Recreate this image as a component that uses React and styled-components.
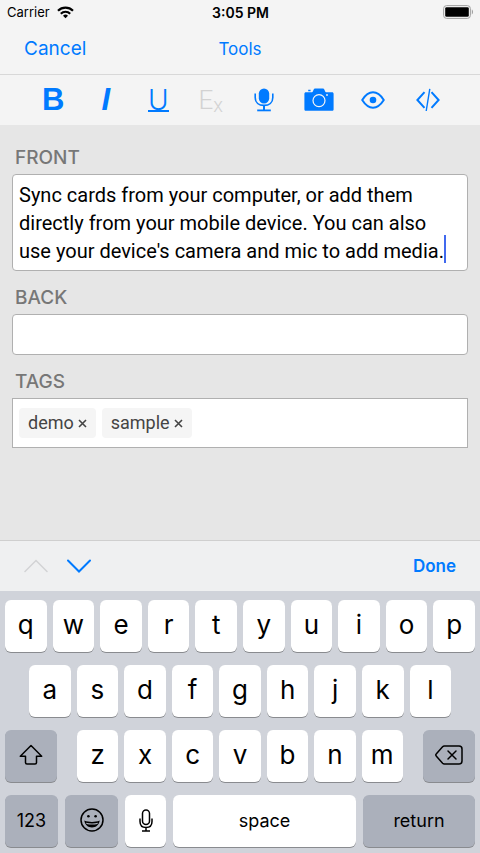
import { useState } from "react";
import styled, { createGlobalStyle } from "styled-components";

const GlobalStyle = createGlobalStyle`
  *, *::before, *::after {
    box-sizing: border-box;
  }

  body {
    margin: 0;
    background-color: #e6e6e6;
    font-family: Inter, "Liberation Sans", sans-serif;
    color: #000;
  }

  button, input, textarea {
    font-family: inherit;
    color: inherit;
    margin: 0;
    padding: 0;
    border: none;
    background: none;
    outline: none;
  }

  button {
    cursor: pointer;
  }
`;

const Screen = styled.div`
  display: flex;
  flex-direction: column;
  min-height: 100vh;
`;

const StatusBar = styled.div`
  display: grid;
  grid-template-columns: 1fr auto 1fr;
  align-items: center;
  height: 24px;
  padding: 0 6px 0 7px;
  background-color: #f4f4f4;
  font-size: 13px;
`;

const Carrier = styled.div`
  display: flex;
  align-items: center;
  gap: 7px;
`;

const Time = styled.time`
  font-size: 14px;
  font-weight: 600;
`;

const Battery = styled.div`
  display: flex;
  justify-content: flex-end;
`;

const NavBar = styled.header`
  display: grid;
  grid-template-columns: 1fr auto 1fr;
  align-items: center;
  height: 51px;
  padding: 0 24px;
  background-color: #f4f4f4;
  border-bottom: 1px solid #d8d8d8;
`;

const NavButton = styled.button`
  justify-self: start;
  font-size: ${(props) => (props.$large ? "19px" : "17px")};
  line-height: 24px;
  color: #007aff;
`;

const Toolbar = styled.div`
  display: grid;
  grid-template-columns: repeat(4, 52fr) repeat(4, 54fr);
  height: 50px;
  padding: 0 25px 0 27px;
  background-color: #f4f4f4;
`;

const ToolButton = styled.button`
  display: flex;
  align-items: center;
  justify-content: center;
  color: #007aff;

  &:disabled {
    color: #d2d2d2;
  }
`;

const Letter = styled.span`
  font-family: "Liberation Sans", sans-serif;
  font-size: 31px;
  font-weight: 700;
  font-style: ${(props) => (props.$italic ? "italic" : "normal")};
  line-height: 32px;
`;

const Underlined = styled.span`
  height: 23px;
  border-bottom: 2px solid currentColor;
  font-size: 28px;
  font-weight: 300;
  line-height: 22px;
`;

const ClearFormat = styled.span`
  display: flex;
  align-items: flex-end;
  font-family: Roboto, "Liberation Sans", sans-serif;
  font-size: 26px;
  font-weight: 300;
  line-height: 26px;

  & small {
    font-size: 20px;
    line-height: 16px;
  }
`;

const Editor = styled.main`
  flex: 1;
  padding: 6px 12px 24px;
  background-color: #e6e6e6;
`;

const Label = styled.label`
  display: block;
  padding: 15px 3px 4px;
  font-size: 19px;
  font-weight: 500;
  line-height: 24px;
  color: #777;
`;

const Field = styled.div`
  position: relative;
  display: flex;
  flex-wrap: wrap;
  gap: 6px;
  background-color: #fff;
  border: 1px solid #b0b0b0;
  border-radius: ${(props) => (props.$square ? "0" : "4px")};
  padding: ${(props) => (props.$square ? "9px 6px" : "0")};
`;

const TextArea = styled.textarea`
  display: block;
  flex: 1;
  padding: 6px 6px 5px;
  font-family: Roboto, "Liberation Sans", sans-serif;
  font-size: 20px;
  line-height: 28px;
  resize: none;
  overflow: hidden;
`;

const Caret = styled.span`
  position: absolute;
  right: 21px;
  bottom: 7px;
  width: 2px;
  height: 28px;
  background-color: #4169ee;
`;

const Tag = styled.span`
  display: flex;
  align-items: center;
  gap: 4px;
  height: 30px;
  padding: 0 9px 2px;
  background-color: #f5f5f5;
  border-radius: 4px;
  font-family: Roboto, "Liberation Sans", sans-serif;
  font-size: 18px;
  color: #444;
`;

const RemoveTag = styled.button`
  display: flex;
  padding-top: 2px;
`;

const TagInput = styled.input`
  flex: 1;
  min-width: 40px;
  height: 30px;
  font-size: 18px;
`;

const AccessoryBar = styled.div`
  display: flex;
  align-items: center;
  justify-content: space-between;
  height: 51px;
  padding: 0 24px;
  background-color: #eff0f1;
  border-top: 1px solid #cfcfcf;
`;

const Arrows = styled.div`
  display: flex;
  gap: 19px;
`;

const ArrowButton = styled.button`
  display: flex;
  color: #007aff;

  &:disabled {
    color: #d2d3d5;
  }
`;

const DoneButton = styled.button`
  font-size: 17px;
  font-weight: 600;
  line-height: 24px;
  color: #007aff;
`;

const Keyboard = styled.div`
  display: flex;
  flex-direction: column;
  gap: 13px;
  padding: 9px 5px 6px;
  background-color: #d0d3da;
`;

const KeyRow = styled.div`
  display: flex;
  gap: ${(props) => props.$gap || "6px"};
  padding: 0 ${(props) => props.$inset || "0"};
`;

const KeyGroup = styled.div`
  flex: 1;
  display: flex;
  gap: 6px;
`;

const Key = styled.button`
  display: flex;
  align-items: center;
  justify-content: center;
  flex: ${(props) => (props.$width ? `0 0 ${props.$width}` : "1")};
  min-width: 0;
  height: 52px;
  padding-bottom: ${(props) => (props.$letter ? "4px" : "2px")};
  background-color: ${(props) => (props.$dark ? "#abb0bb" : "#fff")};
  border-radius: 6px;
  box-shadow: 0 1px 0 #898b8f;
  font-size: ${(props) => (props.$letter ? "26px" : "18px")};
`;

const topRow = "qwertyuiop".split("");
const middleRow = "asdfghjkl".split("");
const bottomRow = "zxcvbnm".split("");

function WifiIcon() {
  return (
    <svg width="17" height="13" viewBox="0 0 17 13" fill="none" stroke="#000">
      <path d="M1 4.8a10.6 10.6 0 0 1 15 0" strokeWidth="2.2" />
      <path d="M3.8 7.7a6.6 6.6 0 0 1 9.4 0" strokeWidth="2.1" />
      <path d="M8.5 12.2 6 9.8a3.6 3.6 0 0 1 5 0z" fill="#000" stroke="none" />
    </svg>
  );
}

function BatteryIcon() {
  return (
    <svg width="31" height="14" viewBox="0 0 31 14">
      <rect x="0.6" y="0.6" width="26.8" height="12.8" rx="3" fill="none" stroke="#a0a0a0" />
      <rect x="2.2" y="2.2" width="23.6" height="9.6" rx="1.4" />
      <path d="M28.8 4.6c1.6.6 1.6 4.2 0 4.8z" fill="#a0a0a0" />
    </svg>
  );
}

function MicIcon() {
  return (
    <svg width="20" height="24" viewBox="0 0 20 24" fill="none" stroke="currentColor">
      <rect x="4.8" y="0.4" width="10.4" height="15" rx="5.2" fill="currentColor" stroke="none" />
      <path d="M1.2 5.6v3.8c0 5.2 3.6 8 8.8 8s8.8-2.8 8.8-8V5.6" strokeWidth="1.6" />
      <path d="M10 17v5" strokeWidth="2" />
      <path d="M3.2 22.4h13.6" strokeWidth="1.8" />
    </svg>
  );
}

function CameraIcon() {
  return (
    <svg width="30" height="24" viewBox="0 0 30 24">
      <path
        fill="currentColor"
        d="M2 4.2h5.6c.7 0 1-.4 1.3-1l.8-1.6c.4-.8.8-1 1.6-1h7.4c.8 0 1.2.2 1.6 1l.8 1.6c.3.6.6 1 1.3 1H28c1 0 1.6.6 1.6 1.6v15.4c0 1-.6 1.6-1.6 1.6H2c-1 0-1.6-.6-1.6-1.6V5.8c0-1 .6-1.6 1.6-1.6zM4.2 1.8h2.4v1.4H4.2z"
      />
      <circle cx="15" cy="12.6" r="6" fill="none" stroke="#f4f4f4" strokeWidth="1.2" />
      <circle cx="23" cy="7" r="0.9" fill="#f4f4f4" />
    </svg>
  );
}

function EyeIcon() {
  return (
    <svg width="24" height="18" viewBox="0 0 24 18">
      <path
        fill="none"
        stroke="currentColor"
        strokeWidth="2"
        strokeLinejoin="round"
        d="M1.2 9C4 4.6 7.6 1.3 12 1.3S20 4.6 22.8 9c-2.8 4.4-6.4 7.7-10.8 7.7S4 13.4 1.2 9z"
      />
      <circle cx="12" cy="9" r="3.3" fill="currentColor" />
    </svg>
  );
}

function CodeIcon() {
  return (
    <svg width="24" height="24" viewBox="0 0 24 24" fill="none" stroke="currentColor">
      <path d="M8.5 4.2 1.4 12l7.1 7.8M15.5 4.2l7.1 7.8-7.1 7.8" strokeWidth="2" />
      <path d="M13.8.8 10.2 23" strokeWidth="1.4" />
    </svg>
  );
}

function ChevronIcon({ up }) {
  return (
    <svg
      width="24"
      height="14"
      viewBox="0 0 24 14"
      fill="none"
      stroke="currentColor"
      strokeWidth={up ? "1.5" : "2"}
      strokeLinecap="round"
    >
      <path d={up ? "M1 12.5l11-11 11 11" : "M1 1.5l11 11 11-11"} />
    </svg>
  );
}

function ShiftIcon() {
  return (
    <svg width="24" height="22" viewBox="0 0 24 22" fill="none" stroke="#000" strokeWidth="1.5" strokeLinejoin="round">
      <path d="M12 1.5 1.3 12.2h5.2v6.3c0 1 .5 1.5 1.5 1.5h8c1 0 1.5-.5 1.5-1.5v-6.3h5.2z" />
    </svg>
  );
}

function DeleteIcon() {
  return (
    <svg
      width="28"
      height="20"
      viewBox="0 0 28 20"
      fill="none"
      stroke="#000"
      strokeWidth="1.5"
      strokeLinejoin="round"
      strokeLinecap="round"
    >
      <path d="M9.3 1H24c1.8 0 3 1.2 3 3v12c0 1.8-1.2 3-3 3H9.3c-.7 0-1.2-.2-1.7-.7L1.4 11.2c-.8-.8-.8-1.6 0-2.4l6.2-7.1c.5-.5 1-.7 1.7-.7z" />
      <path d="M13 6l8 8M21 6l-8 8" />
    </svg>
  );
}

function SmileIcon() {
  return (
    <svg width="24" height="24" viewBox="0 0 24 24">
      <circle cx="12" cy="12" r="11" fill="none" stroke="#000" strokeWidth="1.5" />
      <circle cx="8.4" cy="8.2" r="1.3" />
      <circle cx="15.6" cy="8.2" r="1.3" />
      <path d="M4.3 12.6c2.4 1 5 1.3 7.7 1.3s5.3-.3 7.7-1.3c-.5 4.2-3.6 7-7.7 7s-7.2-2.8-7.7-7z" />
      <path
        d="M6 14.8c3.6 1 8.400 1 12 0-.2.500-.4.800-.6 1.100-3.200.7-7.600.7-10.800 0-.2-.3-.4-.6-.6-1.100z"
        fill="#abb0bb"
      />
    </svg>
  );
}

function DictateIcon() {
  return (
    <svg width="14" height="23" viewBox="0 0 14 23" fill="none" stroke="#000" strokeWidth="1.5">
      <rect x="3.5" y="1" width="7" height="14.5" rx="3.5" />
      <path d="M1 9.5v3c0 3.8 2.3 6 6 6s6-2.2 6-6v-3M7 18.5V22M3 22h8" />
    </svg>
  );
}

function CrossIcon() {
  return (
    <svg width="9" height="9" viewBox="0 0 9 9" stroke="currentColor" strokeWidth="1.6">
      <path d="M1 1l7 7M8 1L1 8" />
    </svg>
  );
}

function LetterKeys({ letters }) {
  return letters.map((letter) => (
    <Key key={letter} type="button" $letter>
      {letter}
    </Key>
  ));
}

function App() {
  const [front, setFront] = useState(
    "Sync cards from your computer, or add them directly from your mobile device. You can also use your device's camera and mic to add media."
  );
  const [back, setBack] = useState("");
  const [tags, setTags] = useState(["demo", "sample"]);

  return (
    <>
      <GlobalStyle />
      <Screen>
        <StatusBar>
          <Carrier>
            Carrier <WifiIcon />
          </Carrier>
          <Time>3:05 PM</Time>
          <Battery>
            <BatteryIcon />
          </Battery>
        </StatusBar>

        <NavBar>
          <NavButton type="button" $large>
            Cancel
          </NavButton>
          <NavButton type="button">Tools</NavButton>
        </NavBar>

        <Toolbar>
          <ToolButton type="button" aria-label="Bold">
            <Letter>B</Letter>
          </ToolButton>
          <ToolButton type="button" aria-label="Italic">
            <Letter $italic>I</Letter>
          </ToolButton>
          <ToolButton type="button" aria-label="Underline">
            <Underlined>U</Underlined>
          </ToolButton>
          <ToolButton type="button" aria-label="Clear formatting" disabled>
            <ClearFormat>
              E<small>x</small>
            </ClearFormat>
          </ToolButton>
          <ToolButton type="button" aria-label="Record audio">
            <MicIcon />
          </ToolButton>
          <ToolButton type="button" aria-label="Add photo">
            <CameraIcon />
          </ToolButton>
          <ToolButton type="button" aria-label="Preview">
            <EyeIcon />
          </ToolButton>
          <ToolButton type="button" aria-label="Edit HTML">
            <CodeIcon />
          </ToolButton>
        </Toolbar>

        <Editor>
          <Label htmlFor="front">FRONT</Label>
          <Field>
            <TextArea
              id="front"
              rows={3}
              value={front}
              onChange={(e) => setFront(e.target.value)}
            />
            <Caret />
          </Field>

          <Label htmlFor="back">BACK</Label>
          <Field>
            <TextArea
              id="back"
              rows={1}
              value={back}
              onChange={(e) => setBack(e.target.value)}
            />
          </Field>

          <Label htmlFor="tags">TAGS</Label>
          <Field $square>
            {tags.map((tag) => (
              <Tag key={tag}>
                {tag}
                <RemoveTag
                  type="button"
                  aria-label={`Remove ${tag}`}
                  onClick={() => setTags(tags.filter((t) => t !== tag))}
                >
                  <CrossIcon />
                </RemoveTag>
              </Tag>
            ))}
            <TagInput id="tags" type="text" />
          </Field>
        </Editor>

        <AccessoryBar>
          <Arrows>
            <ArrowButton type="button" aria-label="Previous field" disabled>
              <ChevronIcon up />
            </ArrowButton>
            <ArrowButton type="button" aria-label="Next field">
              <ChevronIcon />
            </ArrowButton>
          </Arrows>
          <DoneButton type="button">Done</DoneButton>
        </AccessoryBar>

        <Keyboard>
          <KeyRow>
            <LetterKeys letters={topRow} />
          </KeyRow>
          <KeyRow $inset="24px">
            <LetterKeys letters={middleRow} />
          </KeyRow>
          <KeyRow $gap="20px">
            <Key type="button" $dark $width="52px" aria-label="Shift">
              <ShiftIcon />
            </Key>
            <KeyGroup>
              <LetterKeys letters={bottomRow} />
            </KeyGroup>
            <Key type="button" $dark $width="52px" aria-label="Delete">
              <DeleteIcon />
            </Key>
          </KeyRow>
          <KeyRow $gap="7px">
            <Key type="button" $dark $width="53px">
              123
            </Key>
            <Key type="button" $dark $width="53px" aria-label="Emoji">
              <SmileIcon />
            </Key>
            <Key type="button" $width="41px" aria-label="Dictate">
              <DictateIcon />
            </Key>
            <Key type="button">space</Key>
            <Key type="button" $dark $width="112px">
              return
            </Key>
          </KeyRow>
        </Keyboard>
      </Screen>
    </>
  );
}

export default App;
